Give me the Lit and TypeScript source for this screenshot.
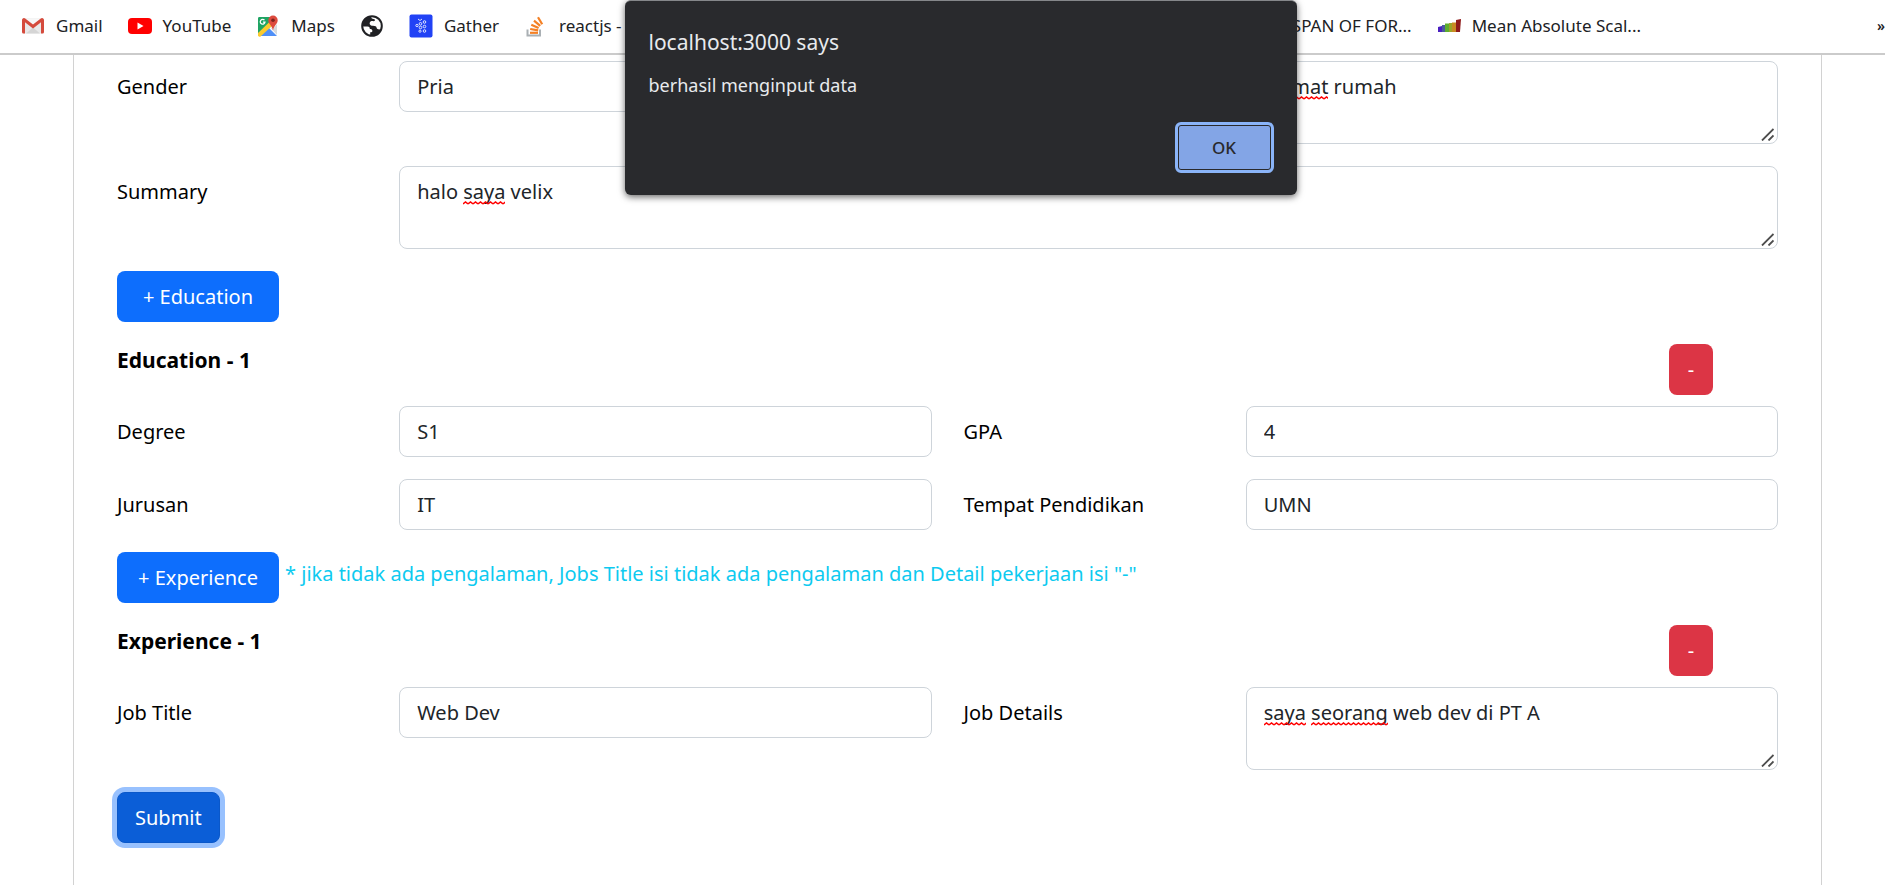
import { LitElement, html, css, nothing, TemplateResult } from "lit";
import { customElement, property, state } from "lit/decorators.js";

const gmailIcon = html`<svg viewBox="0 0 24 24" width="24" height="24" aria-hidden="true">
  <path fill="#e9e9e9" d="M2 4.500h20v15H2z" />
  <path fill="#f7f7f7" d="M4.500 5h15L12 11.500z" />
  <path fill="#d5d5d5" d="M5 19.500l7-6 7 6z" />
  <path fill="#d54b3d" d="M1 6a2 2 0 0 1 3.200-1.600L12 10.600l7.800-6.200A2 2 0 0 1 23 6v12a1.500 1.500 0 0 1-1.500 1.500H20V8.200l-8 6.300-8-6.300v11.300H2.500A1.500 1.500 0 0 1 1 18z" />
</svg>`;

const youtubeIcon = html`<svg viewBox="0 0 24 24" width="24" height="24" aria-hidden="true">
  <rect x="0" y="4" width="24" height="16" rx="4" fill="#ff0000" />
  <path fill="#fff" d="M9.500 8.500v7l6-3.500z" />
</svg>`;

const mapsIcon = html`<svg viewBox="0 0 24 24" width="24" height="24" aria-hidden="true">
  <path fill="#1fa463" d="M3 3h12l-2 8L2 21V4.500A1.500 1.500 0 0 1 3 3z" />
  <path fill="#4f8ff7" d="M3 22l9-9 9 9z" />
  <path fill="#d6d9dd" d="M13 12l4 3 4-5v11z" />
  <path fill="#fbcb2d" d="M2 19L15 6.500l2 4.500L4 23l-2-1z" />
  <path fill="#dd4b3e" d="M17 1.500a4.700 4.700 0 0 1 4.700 4.700c0 3.600-3.700 5-4.700 10.300-1-5.300-4.700-6.700-4.700-10.300A4.700 4.700 0 0 1 17 1.500z" />
  <circle cx="17" cy="6.200" r="1.800" fill="#7d231d" />
  <path fill="none" stroke="#fff" stroke-width="1.200" d="M8.500 6.200A2.400 2.400 0 1 0 9 8.200H7" />
</svg>`;

const globeIcon = html`<svg viewBox="0 0 24 24" width="24" height="24" aria-hidden="true">
  <circle cx="12" cy="12" r="9.800" fill="#fff" stroke="#202124" stroke-width="2" />
  <path fill="#202124" d="M11 2.500C6 3 2.500 7 2.300 12.500h5.200c2 0 2.300 1.200 2.300 2.600 1.200 0 2.400.4 2.600 1.700.1 1-.8 1.500-2.200 1.500v3.200c5 1 10-2 11.400-7-1.500 1-2.600 1.300-4.100.5-1-.6-.7-2.200-1.900-2.800-1.500-.6-3.600 0-5-.9-1.400-1-1.200-3.300.3-4 1.400-.6 3.300.4 4-.7.400-.7-.2-1.500-1.400-1.600-1.100-.1-2.200-.7-2.500-2.500z" />
</svg>`;

const gatherIcon = html`<svg viewBox="0 0 24 24" width="24" height="24" aria-hidden="true">
  <rect x="0.500" y="0.500" width="23" height="23" rx="2" fill="#2142f5" />
  <g fill="none" stroke="#dfe4ff" stroke-width="1">
    <circle cx="8" cy="11.500" r="1.200" /><circle cx="11.500" cy="9.800" r="1.300" />
    <circle cx="15.500" cy="8" r="1.300" /><circle cx="11.500" cy="13.500" r="1.300" />
    <circle cx="15.500" cy="12.500" r="1.300" /><circle cx="15.500" cy="17" r="1.300" />
    <circle cx="11" cy="17.200" r="1.100" />
    <path d="M9 5l2 1.500 2-1.500" />
  </g>
</svg>`;

const stackIcon = html`<svg viewBox="0 0 24 24" width="24" height="24" aria-hidden="true">
  <path fill="none" stroke="#aab0b4" stroke-width="2" d="M3.500 15.500v6h12.500v-6" />
  <g fill="none" stroke="#f48024" stroke-width="2.200">
    <path d="M6 18.800h8" /><path d="M6.200 15l8 1.400" /><path d="M7.300 10.800l7.300 3.200" />
    <path d="M10 6.700l6.200 5.200" /><path d="M14 3.300l4.200 7" />
  </g>
</svg>`;

const chartIcon = html`<svg viewBox="0 0 24 24" width="24" height="24" aria-hidden="true">
  <path fill="#4a1fc0" d="M1 13l4-1v6H1z" /><path fill="#4b5a9c" d="M5 11h3v7H5z" />
  <path fill="#5fae2e" d="M8 9.500h4V18H8z" /><path fill="#9aa52a" d="M12 9h3v9h-3z" />
  <path fill="#c98a22" d="M15 8.500h4V18h-4z" /><path fill="#8f1b1b" d="M19 6l5-1-1 13h-4z" />
</svg>`;

/** One entry of the browser's bookmarks bar. */
const bookmark = (icon: TemplateResult, text: string, name = text) => html`
  <a class="bookmark" href="#" aria-label=${name}>${icon}${text ? html`<span>${text}</span>` : nothing}</a>`;

/** Multi-line text box that underlines misspelt words. */
@customElement("spell-textarea")
class SpellTextarea extends LitElement {
  @property() value = "";
  @property() label = "";
  @property({ attribute: false }) misspelt: string[] = [];

  static styles = css`
    :host { display: block; }
    .box { position: relative; }
    textarea, .marks {
      box-sizing: border-box;
      width: 100%;
      height: 83px;
      padding: 8px 17px;
      border: 1px solid #ced4da;
      border-radius: 8px;
      font: 400 20px/33px "Noto Sans", "Open Sans", sans-serif;
      color: #212529;
      background: #fff;
      display: block;
      margin: 0;
      resize: none;
      outline: none;
      overflow: hidden;
    }
    .marks {
      position: absolute;
      inset: 0;
      background: none;
      border-color: transparent;
      color: transparent;
      pointer-events: none;
      white-space: pre-wrap;
    }
    mark {
      color: transparent;
      background: url("data:image/svg+xml,%3Csvg xmlns='http://www.w3.org/2000/svg' width='5' height='4'%3E%3Cpath d='M0 3 L2.500 1 L5 3' fill='none' stroke='red' stroke-width='1.500'/%3E%3C/svg%3E") repeat-x left bottom;
    }
    .grip { position: absolute; right: 4px; bottom: 3px; }
  `;

  render() {
    const parts = this.value.split(/(\s+)/);
    return html`<div class="box">
      <textarea aria-label=${this.label} spellcheck="false" .value=${this.value}></textarea>
      <div class="marks" aria-hidden="true">${parts.map((p) => (this.misspelt.includes(p) ? html`<mark>${p}</mark>` : p))}</div>
      <svg class="grip" width="13" height="13" viewBox="0 0 13 13" aria-hidden="true">
        <path d="M1 12.500L12.500 1M7.500 12.500l5-5" fill="none" stroke="#4d4d4d" stroke-width="1.800" />
      </svg>
    </div>`;
  }
}

@customElement("app-root")
class AppRoot extends LitElement {
  @state() private alertOpen = true;

  static styles = css`
    :host {
      display: flex;
      flex-direction: column;
      position: relative;
      height: 100vh;
      overflow: hidden;
      background: #fff;
      color: #000;
      font: 400 20px/33px "Noto Sans", "Open Sans", sans-serif;
    }
    * { box-sizing: border-box; }

    .bookmarks {
      display: flex;
      flex: none;
      align-items: center;
      gap: 25px;
      height: 55px;
      padding: 0 0 1px 21px;
      border-bottom: 2px solid #cbcbcb;
      font-size: 17px;
      line-height: 24px;
      color: #202124;
      white-space: nowrap;
    }
    .bookmark {
      display: flex;
      align-items: center;
      gap: 11px;
      color: inherit;
      text-decoration: none;
    }
    .bookmark svg { flex: none; }
    .fill { flex: 1; }
    .more {
      width: 219px;
      padding: 0;
      border: 0;
      background: none;
      color: inherit;
      font: inherit;
      font-size: 14px;
      font-weight: 600;
      text-align: right;
    }

    .page { flex: 1; min-height: 0; padding: 0 63px 0 73px; }
    .card {
      height: 100%;
      padding: 6px 27px 0;
      border: solid #d2d2d2;
      border-width: 0 1px;
    }
    form { display: flex; flex-direction: column; gap: 22px; }
    .row { display: grid; grid-template-columns: 2fr 4fr 2fr 4fr; align-items: start; }
    .row > * { margin: 0 16px; min-width: 0; }
    .row > label { padding-top: 9px; white-space: nowrap; }
    .wide { grid-column: 2 / -1; }
    .group { display: flex; flex-direction: column; gap: 11px; }

    .control {
      height: 51px;
      padding: 8px 17px;
      border: 1px solid #ced4da;
      border-radius: 8px;
      background: #fff;
      color: #212529;
      font: inherit;
      outline: none;
      appearance: none;
    }

    .actions { display: flex; align-items: start; gap: 6px; padding: 0 16px; }
    .btn {
      height: 51px;
      padding: 0 17px;
      border: 1px solid transparent;
      border-radius: 8px;
      color: #fff;
      font: inherit;
    }
    .add { min-width: 162px; background: #0d6efd; white-space: pre; }
    .note { padding-top: 5px; color: #0dcaf0; }
    .submit {
      background: #0b5ed7;
      border-color: #0a58ca;
      box-shadow: 0 0 0 5px #98c1fe;
    }
    .head { display: flex; justify-content: space-between; align-items: start; padding: 0 81px 0 16px; }
    .head h2 { margin: 0; font-size: 21px; font-weight: 700; line-height: 33px; }
    .remove { width: 44px; background: #dc3545; }

    .overlay {
      position: absolute;
      inset: 0 0 auto 0;
      display: flex;
      justify-content: center;
      padding-left: 36px;
      pointer-events: none;
    }
    .alert {
      display: flex;
      flex-direction: column;
      width: 672px;
      padding: 25px 23px 22px 24px;
      border-radius: 6px;
      border-top: 1px solid #85878a;
      background: #292a2d;
      color: #e8eaed;
      box-shadow: 0 2px 7px rgba(0, 0, 0, 0.6);
      pointer-events: auto;
    }
    .alert h1 { margin: 0 0 13px; font-size: 21px; font-weight: 400; line-height: 32px; }
    .alert p { margin: 0 0 23px; font-size: 18px; line-height: 28px; }
    .ok {
      align-self: flex-end;
      width: 99px;
      height: 51px;
      border: 3px solid #8ab4f8;
      border-radius: 6px;
      background: #83a5e6;
      box-shadow: inset 0 0 0 1px #292a2d;
      color: #292a2d;
      font: inherit;
      font-size: 17px;
      font-weight: 500;
    }
  `;

  render() {
    return html`
      <nav class="bookmarks" aria-label="Bookmarks">
        ${bookmark(gmailIcon, "Gmail")} ${bookmark(youtubeIcon, "YouTube")} ${bookmark(mapsIcon, "Maps")}
        ${bookmark(globeIcon, "", "Website")} ${bookmark(gatherIcon, "Gather")} ${bookmark(stackIcon, "reactjs -")}
        <span class="fill"></span>
        <a class="bookmark" href="#">SPAN OF FOR...</a>
        ${bookmark(chartIcon, "Mean Absolute Scal...")}
        <button class="more" aria-label="More bookmarks">»</button>
      </nav>

      <main class="page">
        <div class="card">
          <form @submit=${(e: Event) => e.preventDefault()}>
            <div class="row">
              <label for="gender">Gender</label>
              <select id="gender" class="control"><option>Pria</option><option>Wanita</option></select>
              <label for="address">Alamat</label>
              <spell-textarea id="address" label="Alamat" value="alamat rumah" .misspelt=${["alamat"]}></spell-textarea>
            </div>
            <div class="row">
              <label for="summary">Summary</label>
              <spell-textarea id="summary" class="wide" label="Summary" value="halo saya velix" .misspelt=${["saya"]}></spell-textarea>
            </div>
            <div class="actions"><button type="button" class="btn add">+ Education</button></div>

            <div class="group">
              <div class="head">
                <h2>Education - 1</h2>
                <button type="button" class="btn remove">-</button>
              </div>
              <div class="row">
                <label for="degree">Degree</label><input id="degree" class="control" .value=${"S1"} />
                <label for="gpa">GPA</label><input id="gpa" class="control" .value=${"4"} />
              </div>
            </div>
            <div class="row">
              <label for="major">Jurusan</label><input id="major" class="control" .value=${"IT"} />
              <label for="school">Tempat Pendidikan</label><input id="school" class="control" .value=${"UMN"} />
            </div>
            <div class="actions">
              <button type="button" class="btn add">+ Experience</button>
              <span class="note">* jika tidak ada pengalaman, Jobs Title isi tidak ada pengalaman dan Detail pekerjaan isi "-"</span>
            </div>

            <div class="group">
              <div class="head">
                <h2>Experience - 1</h2>
                <button type="button" class="btn remove">-</button>
              </div>
              <div class="row">
                <label for="job">Job Title</label><input id="job" class="control" .value=${"Web Dev"} />
                <label for="details">Job Details</label>
                <spell-textarea id="details" label="Job Details" value="saya seorang web dev di PT A" .misspelt=${["saya", "seorang"]}></spell-textarea>
              </div>
            </div>
            <div class="actions"><button class="btn submit">Submit</button></div>
          </form>
        </div>
      </main>

      ${this.alertOpen
        ? html`<div class="overlay">
            <section class="alert" role="alertdialog" aria-labelledby="alert-title" aria-describedby="alert-text">
              <h1 id="alert-title">localhost:3000 says</h1>
              <p id="alert-text">berhasil menginput data</p>
              <button class="ok" @click=${() => (this.alertOpen = false)}>OK</button>
            </section>
          </div>`
        : nothing}
    `;
  }
}
